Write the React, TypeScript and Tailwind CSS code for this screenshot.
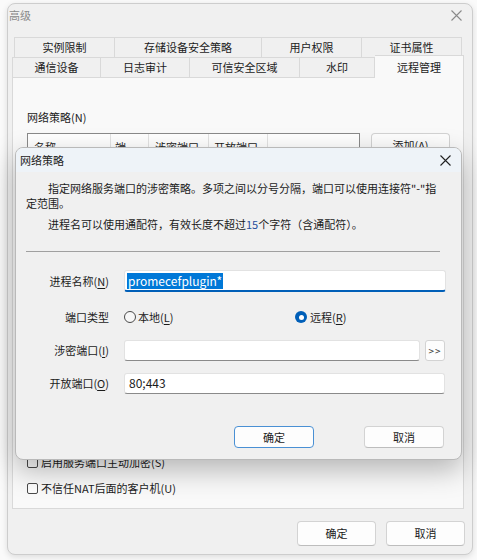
import React from "react";

const font = { fontFamily: '"Noto Sans CJK SC", "Noto Sans", sans-serif' };

function XIcon({ className, color }: { className?: string; color: string }) {
  return (
    <svg className={className} width="11" height="11" viewBox="0 0 11 11">
      <path d="M0.5 0.5 L10.5 10.5 M10.5 0.5 L0.5 10.5" stroke={color} strokeWidth="1.1" fill="none" />
    </svg>
  );
}

function Tab({ w, label, first }: { w: string; label: string; first?: boolean }) {
  return (
    <div
      className={`${w} h-full flex items-center justify-center border-t border-r border-[#d9d9d9] bg-[#f0f0f0] text-[11px] text-[#1b1b1b] ${first ? "border-l" : ""}`}
    >
      {label}
    </div>
  );
}

function U({ c }: { c: string }) {
  return <span className="underline underline-offset-[2px]">{c}</span>;
}

function CheckBox({ label }: { label: string }) {
  return (
    <div className="flex items-center h-[16px] text-[11px] text-[#1b1b1b]">
      <div className="w-[11px] h-[11px] rounded-[2px] border border-[#4a4a4a] bg-[#fcfcfc]" />
      <span className="ml-[3px]">{label}</span>
    </div>
  );
}

function Btn({ children, w, h, focused }: { children: React.ReactNode; w: string; h: string; focused?: boolean }) {
  return (
    <div
      className={`${w} ${h} flex items-center justify-center rounded-[4px] bg-[#fdfdfd] text-[11px] text-[#1b1b1b] ${
        focused ? "border-[1.5px] border-[#4a90d4]" : "border border-[#d3d3d3] border-b-[#bdbdbd]"
      }`}
    >
      {children}
    </div>
  );
}

export default function App() {
  return (
    <div className="relative w-[477px] h-[560px] overflow-hidden bg-[#fafafa] pt-[3px]" style={font}>
      {/* outer window */}
      <div className="ml-[7px] w-[466px] h-[552px] rounded-[8px] border border-[#cdcdcd] bg-[#f0f0f0] shadow-[0_2px_6px_rgba(0,0,0,0.12)] flex flex-col">
        <div className="h-[23px] flex items-center justify-between pl-[1px] pr-[10px]">
          <span className="text-[11px] text-[#8a8a8a]">高级</span>
          <XIcon color="#8a8a8a" />
        </div>

        {/* tabs */}
        <div className="mt-[10px] ml-[6px] flex h-[20px]">
          <Tab w="w-[101px]" label="实例限制" first />
          <Tab w="w-[147px]" label="存储设备安全策略" />
          <Tab w="w-[100px]" label="用户权限" />
          <Tab w="w-[100px]" label="证书属性" />
        </div>
        <div className="ml-[4px] flex h-[20px] items-end">
          <Tab w="w-[89px]" label="通信设备" first />
          <Tab w="w-[89px]" label="日志审计" />
          <Tab w="w-[110px]" label="可信安全区域" />
          <Tab w="w-[75px]" label="水印" />
          <div className="relative z-10 w-[89px] h-[23px] -mb-px flex items-start justify-center pt-[3px] border-t border-r border-[#d9d9d9] bg-[#f9f9f9] text-[11px] text-[#1b1b1b]">
            远程管理
          </div>
        </div>

        {/* panel */}
        <div className="ml-[4px] w-[452px] h-[432px] border border-[#d9d9d9] bg-[#f9f9f9] pl-[14px] pt-[31px] flex flex-col">
          <div className="h-[16px] leading-[16px] text-[11px] text-[#1b1b1b]">网络策略(N)</div>
          <div className="mt-[8px] flex items-start">
            <div className="w-[333px] h-[310px] border border-[#8a8a8a] bg-white">
              <div className="flex h-[22px] text-[11px] text-[#1b1b1b] items-center">
                <div className="w-[83px] h-full pl-[6px] pt-[5px] border-r border-[#e3e3e3]">名称</div>
                <div className="w-[38px] h-full pl-[4px] pt-[5px] border-r border-[#e3e3e3]">端</div>
                <div className="w-[60px] h-full pl-[6px] pt-[5px] border-r border-[#e3e3e3]">涉密端口</div>
                <div className="w-[59px] h-full pl-[5px] pt-[5px] border-r border-[#e3e3e3]">开放端口</div>
              </div>
            </div>
            <div className="ml-[11px]">
              <Btn w="w-[79px]" h="h-[24px]">
                添加(A)
              </Btn>
            </div>
          </div>
          <div className="mt-[11px]">
            <CheckBox label="启用服务端口主动加密(S)" />
          </div>
          <div className="mt-[10px]">
            <CheckBox label="不信任NAT后面的客户机(U)" />
          </div>
        </div>

        <div className="mt-[12px] flex justify-end gap-[10px] pr-[7px]">
          <Btn w="w-[79px]" h="h-[25px]">确定</Btn>
          <Btn w="w-[79px]" h="h-[25px]">取消</Btn>
        </div>
      </div>

      {/* dialog overlay */}
      <div className="absolute left-[15px] top-[147px] w-[447px] h-[313px] rounded-[8px] overflow-hidden border border-[#b9b9b9] bg-[#f0f0f0] shadow-[0_10px_28px_rgba(0,0,0,0.28)] flex flex-col">
        <div className="h-[24px] shrink-0 bg-[#eef3f8] flex items-center justify-between pl-[4px] pr-[10px]">
          <span className="text-[11px] text-[#1b1b1b]">网络策略</span>
          <XIcon color="#222" />
        </div>
        <div className="px-[10px] pt-[9px] text-[11px] leading-[15px] text-[#1b1b1b]">
          <p className="indent-[22px] whitespace-nowrap">
            指定网络服务端口的涉密策略。多项之间以分号分隔，端口可以使用连接符"-"指
            <br />
            定范围。
          </p>
          <p className="mt-[6px] indent-[22px] whitespace-nowrap">
            进程名可以使用通配符，有效长度不超过<span className="text-[#1f4e9c]">15</span>个字符（含通配符）。
          </p>
          <div className="mt-[19px] w-[414px] h-px bg-[#a0a0a0]" />
        </div>

        {/* form */}
        <div className="mt-[18px] flex flex-col text-[11px] text-[#1b1b1b]">
          <div className="flex items-center h-[22px]">
            <div className="w-[93px] text-right">
              进程名称(<U c="N" />)
            </div>
            <div className="ml-[15px] w-[322px] h-[22px] rounded-[3px] bg-white border border-[#e2e2e2] border-b-2 border-b-[#005fb8] flex items-center pl-[2px]">
              <span className="bg-[#0078d7] text-white text-[12px] leading-[16px] px-px">promecefplugin*</span>
            </div>
          </div>

          <div className="mt-[14px] flex items-center h-[22px]">
            <div className="w-[93px] text-right">端口类型</div>
            <div className="ml-[15px] w-[171px] flex items-center">
              <div className="w-[12px] h-[12px] rounded-full border border-[#4a4a4a] bg-[#f7f7f7]" />
              <span className="ml-[2px]">
                本地(<U c="L" />)
              </span>
            </div>
            <div className="flex items-center">
              <div className="w-[12px] h-[12px] rounded-full bg-[#005fb8] flex items-center justify-center">
                <div className="w-[5px] h-[5px] rounded-full bg-white" />
              </div>
              <span className="ml-[3px]">
                远程(<U c="R" />)
              </span>
            </div>
          </div>

          <div className="mt-[11px] flex items-center h-[22px]">
            <div className="w-[93px] text-right">
              涉密端口(<U c="I" />)
            </div>
            <div className="ml-[15px] w-[296px] h-[21px] rounded-[3px] bg-white border border-[#e2e2e2] border-b-[#8a8a8a]" />
            <div className="ml-[5px] w-[20px] h-[21px] rounded-[3px] bg-[#fdfdfd] border border-[#d3d3d3] flex items-center justify-center text-[10px] text-[#333] tracking-[1px]">
              &gt;&gt;
            </div>
          </div>

          <div className="mt-[11px] flex items-center h-[22px]">
            <div className="w-[93px] text-right">
              开放端口(<U c="O" />)
            </div>
            <div className="ml-[15px] w-[321px] h-[21px] rounded-[3px] bg-white border border-[#e2e2e2] border-b-[#8a8a8a] flex items-center pl-[4px] text-[12px]">
              80;443
            </div>
          </div>

          <div className="mt-[32px] flex justify-end gap-[50px] pr-[17px]">
            <Btn w="w-[80px]" h="h-[22px]" focused>
              确定
            </Btn>
            <Btn w="w-[80px]" h="h-[22px]">
              取消
            </Btn>
          </div>
        </div>
      </div>
    </div>
  );
}
